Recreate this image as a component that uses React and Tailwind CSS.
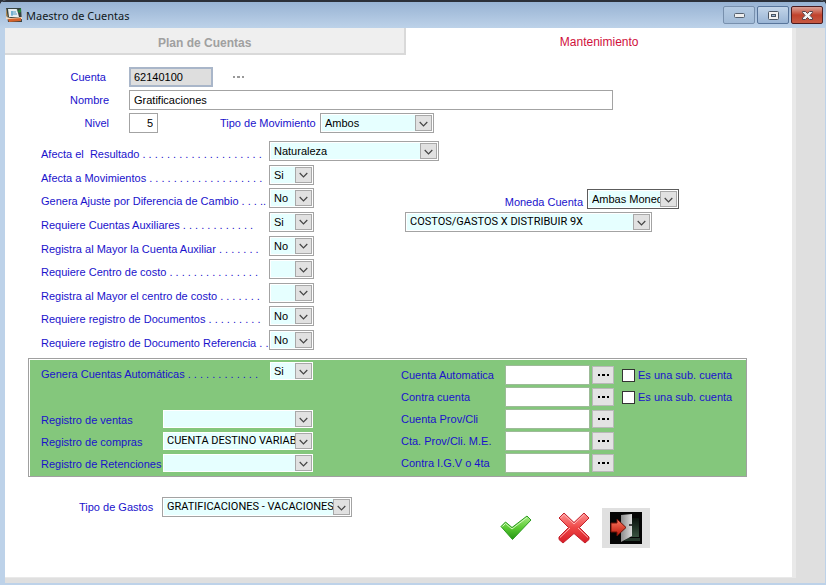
import React from "react";

function Field({ id, label, value = "", className = "", font = "", frame = "border-[#a3a3a3]", labelled = false }) {
  return (
    <span className={`relative flex h-5 shrink-0 border bg-white p-px ${frame} ${className}`}>
      <select
        id={id}
        aria-label={labelled ? undefined : label}
        defaultValue={value}
        className={`h-4 w-full appearance-none rounded-none bg-[#e6ffff] pl-[3px] pr-[17px] text-[11px] leading-4 text-black outline-none ${font}`}
      >
        <option value={value}>{value}</option>
      </select>
      <span className="pointer-events-none absolute right-px top-px flex h-4 w-[17px] items-center justify-center border border-[#a8a8a8] bg-[#e1e1e1] pt-px">
        <svg width="9" height="6" viewBox="0 0 9 6" fill="none" stroke="#444" strokeWidth="1.2" aria-hidden="true">
          <path d="M0.7 1 4.5 4.8 8.3 1" />
        </svg>
      </span>
    </span>
  );
}

function Dots({ label, className = "" }) {
  return (
    <button type="button" aria-label={label} className={`flex shrink-0 items-center justify-center ${className}`}>
      <svg width="11" height="2" viewBox="0 0 11 2" fill="currentColor" aria-hidden="true">
        <path d="M0 0h2v2H0zM4 0h3v2H4zM9 0h2v2H9z" />
      </svg>
    </button>
  );
}

const capsFont = "font-['Roboto','Liberation_Sans',sans-serif]";

const options = [
  ["resultado", "Afecta el  Resultado . . . . . . . . . . . . . . . . . . . .", "Naturaleza"],
  ["movimientos", "Afecta a Movimientos . . . . . . . . . . . . . . . . . . .", "Si"],
  ["ajuste", "Genera Ajuste por Diferencia de Cambio . . . ..", "No"],
  ["auxiliares", "Requiere Cuentas Auxiliares . . . . . . . . . . . .", "Si"],
  ["mayoraux", "Registra al Mayor la Cuenta Auxiliar . . . . . . .", "No"],
  ["centro", "Requiere Centro de costo . . . . . . . . . . . . . . .", ""],
  ["mayorcentro", "Registra al Mayor el centro de costo . . . . . . .", ""],
  ["documentos", "Requiere registro de Documentos . . . . . . . . .", "No"],
  ["referencia", "Requiere registro de Documento Referencia . .", "No"],
];

const registers = [
  ["ventas", "Registro de ventas", ""],
  ["compras", "Registro de compras", "CUENTA DESTINO VARIABLE"],
  ["retenciones", "Registro de Retenciones", ""],
];

const accounts = [
  ["automatica", "Cuenta Automatica", true],
  ["contra", "Contra cuenta", true],
  ["prov", "Cuenta Prov/Cli", false],
  ["provme", "Cta. Prov/Cli. M.E.", false],
  ["igv", "Contra I.G.V o 4ta", false],
];

function TitleBar() {
  return (
    <header className="flex h-7 items-center border-t-2 border-[#2b2f38] bg-gradient-to-b from-[#98b3d3] to-[#bdd2e9] pl-[6px] pr-[3px]">
      <svg width="16" height="16" viewBox="0 0 16 16" aria-hidden="true">
        <path d="M0 1h15l1 14H2z" fill="#37423f" />
        <path d="M2 2h9l2 8H3z" fill="#e9eef0" />
        <path d="M5 5h5M5 7h6M6 4v5" stroke="#4e9cc4" strokeWidth="1" />
        <path d="m10 2 2 2 3-3v4l-2 1z" fill="#25843b" />
        <path d="m0 10 5 1 11-1v2l-11 1-5-1z" fill="#f3d9bd" />
        <path d="m2 12 13-1v3l-12 1z" fill="#d4622b" />
        <path d="M0 1v8l2 1z" fill="#b08b57" />
      </svg>
      <h1 className="ml-1 flex-1 pt-px font-['Noto_Sans','Open_Sans',sans-serif] text-[11px] text-[#101820]">Maestro de Cuentas</h1>
      <div className="flex gap-[2px]">
        <button type="button" aria-label="Minimizar" className="flex h-[18px] w-8 items-center justify-center rounded-[2px] border border-[#7890ad] bg-gradient-to-b from-[#b4cae2] to-[#a2bbd7]">
          <svg width="11" height="6" viewBox="0 0 11 6" aria-hidden="true"><rect x=".5" y="1.5" width="10" height="4" rx="1" fill="#eee" stroke="#55606e" /></svg>
        </button>
        <button type="button" aria-label="Maximizar" className="flex h-[18px] w-8 items-center justify-center rounded-[2px] border border-[#58759b] bg-gradient-to-b from-[#c3d5e9] to-[#9ab5d5]">
          <svg width="11" height="9" viewBox="0 0 11 9" aria-hidden="true"><rect x=".5" y=".5" width="10" height="8" rx="1" fill="#f2f2f2" stroke="#4b5562" /><rect x="3.5" y="3.5" width="4" height="2" fill="#9db6d4" stroke="#4b5562" /></svg>
        </button>
        <button type="button" aria-label="Cerrar" className="flex h-[18px] w-8 items-center justify-center rounded-[2px] border border-[#4c1c20] bg-gradient-to-b from-[#d9a096] via-[#c0412c] to-[#c65a44]">
          <svg width="11" height="9" viewBox="0 0 11 9" aria-hidden="true"><path d="M.5.5h3l2 2 2-2h3v1L8 4.500l2.500 2.500v1.500h-3l-2-2-2 2h-3V7L3 4.500.5 1.500z" fill="#f4f4f4" stroke="#54424a" /></svg>
        </button>
      </div>
    </header>
  );
}

export default function App() {
  return (
    <div className="flex min-h-screen flex-col bg-[#2b2f38] font-['Liberation_Sans',Arial,sans-serif] text-[11px] leading-[14px] text-[#1a12cc]">
      <div className="flex flex-1 flex-col overflow-hidden rounded-t-md bg-[#bdd2e9]">
        <TitleBar />
        <div className="ml-[5px] mr-px mb-[2px] flex flex-1 flex-col bg-[#dfdfdf] pb-[5px] pr-[29px]">
          <main className="flex flex-1 flex-col border-b border-r-4 border-[#e9e9e9] bg-white">
            <nav className="flex h-[27px] text-[12px]">
              <button type="button" className="basis-[51%] border-b-2 border-r-2 border-[#d9d9d9] bg-[#efefef] pt-1 font-bold text-[#a0a0a0]">Plan de Cuentas</button>
              <button type="button" className="flex-1 text-[#d0103c]">Mantenimiento</button>
            </nav>

            <form className="flex flex-col" onSubmit={(e) => e.preventDefault()}>
              <div className="flex flex-col gap-[3px] pl-[65px] pt-3">
                <div className="flex items-center">
                  <label htmlFor="cuenta" className="w-[39px] text-right">Cuenta&nbsp;</label>
                  <input id="cuenta" defaultValue="62140100" className="ml-5 h-5 w-[84px] border-2 border-[#a9b6c9] bg-[#dedede] px-[3px] text-black" />
                  <Dots label="Buscar cuenta" className="ml-5 h-5 text-[#999]" />
                </div>
                <div className="flex items-center pr-[179px]">
                  <label htmlFor="nombre" className="w-[39px] text-right">Nombre</label>
                  <input id="nombre" defaultValue="Gratificaciones" className="ml-5 h-5 min-w-0 flex-1 border border-[#a3a3a3] bg-white px-1 text-black" />
                </div>
                <div className="flex items-center">
                  <label htmlFor="nivel" className="w-[39px] text-right">Nivel</label>
                  <input id="nivel" defaultValue="5" className="ml-5 h-5 w-[29px] border border-[#a3a3a3] bg-white px-1 text-right text-black" />
                  <label htmlFor="tipomov" className="ml-[62px] w-[100px]">Tipo de Movimiento</label>
                  <Field id="tipomov" labelled value="Ambos" className="w-[114px]" />
                </div>
              </div>

              <div className="mt-2 flex pl-9">
                <div className="flex h-[209px] w-[364px] flex-col justify-between">
                  {options.map(([id, text, value], i) => (
                    <div key={id} className="flex h-5 items-end">
                      <label htmlFor={id} className="w-[228px] shrink-0 whitespace-pre">{text}</label>
                      <Field id={id} labelled value={value} className={i === 0 ? "w-[170px]" : "w-[45px]"} />
                    </div>
                  ))}
                </div>
                <div className="flex w-[274px] flex-col gap-[3px] pt-12">
                  <div className="flex items-end justify-end gap-1">
                    <label htmlFor="moneda">Moneda Cuenta</label>
                    <Field id="moneda" labelled value="Ambas Monedas" frame="border-[#5c5c5c]" className="w-[92px]" />
                  </div>
                  <Field id="distribuir" label="Distribución" value="COSTOS/GASTOS X DISTRIBUIR 9X" font={capsFont} className="w-[247px]" />
                </div>
              </div>

              <fieldset className="ml-[23px] mr-[45px] mt-2 border border-[#a0a0a0] bg-[#84c77c] shadow-[inset_1px_1px_0_#fff]">
                <div className="flex h-[117px] justify-between px-3">
                  <div className="flex flex-col justify-between pb-[3px] pt-[2px]">
                    <div className="flex h-5 items-end">
                      <label htmlFor="genera" className="w-[228px]">Genera Cuentas Automáticas . . . . . . . . . . . .</label>
                      <Field id="genera" labelled value="Si" frame="border-transparent bg-clip-padding" className="w-[45px]" />
                    </div>
                    <div className="flex flex-col gap-[2px]">
                      {registers.map(([id, text, value]) => (
                        <div key={id} className="flex items-center">
                          <label htmlFor={id} className="w-[121px] pt-px">{text}</label>
                          <Field id={id} labelled value={value} font={capsFont} frame="border-transparent bg-clip-padding" className="w-[152px]" />
                        </div>
                      ))}
                    </div>
                  </div>
                  <div className="flex w-[333px] flex-col justify-end gap-[2px] pb-[3px]">
                    {accounts.map(([id, text, sub]) => (
                      <div key={id} className="flex items-center">
                        <label htmlFor={id} className="w-[104px]">{text}</label>
                        <input id={id} className="h-5 w-[85px] border border-[#9dbb98] bg-white px-1 text-black" />
                        <Dots label={`Buscar ${text}`} className="ml-[2px] h-[18px] w-[22px] border border-[#b9b9b9] bg-[#e3e3e3] text-black" />
                        {sub && (
                          <label className="ml-2 flex items-center gap-[3px] whitespace-nowrap">
                            <input type="checkbox" className="h-[13px] w-[13px] appearance-none border border-[#333] bg-white" />
                            Es una sub. cuenta
                          </label>
                        )}
                      </div>
                    ))}
                  </div>
                </div>
              </fieldset>

              <div className="flex pl-[74px] pt-5">
                <div className="flex h-5 items-center">
                  <label htmlFor="gastos" className="w-[83px]">Tipo de Gastos</label>
                  <Field id="gastos" labelled value="GRATIFICACIONES - VACACIONES" font={capsFont} className="w-[190px]" />
                </div>
                <div className="ml-36 mt-[11px] flex items-center">
                  <button type="button" aria-label="Aceptar" className="flex h-10 w-10 items-center justify-center">
                    <svg width="32" height="28" viewBox="0 0 32 28" aria-hidden="true">
                      <defs><linearGradient id="ok" x1="0" y1="0" x2="0" y2="1"><stop offset="0" stopColor="#a8ec84" /><stop offset=".5" stopColor="#5bcb34" /><stop offset="1" stopColor="#269414" /></linearGradient></defs>
                      <path d="M1 12.500 5.500 8l6.500 5.500L27 2l4 4L12.500 25.500z" fill="url(#ok)" stroke="#2b9c1f" strokeLinejoin="round" />
                      <path d="m2.500 12.500 3-3 6.500 5.500L27 3.500" fill="none" stroke="#d3f8bd" />
                    </svg>
                  </button>
                  <button type="button" aria-label="Cancelar" className="ml-[18px] flex h-10 w-10 items-center justify-center">
                    <svg width="32" height="32" viewBox="0 0 32 32" aria-hidden="true">
                      <defs><linearGradient id="no" x1="0" y1="0" x2="0" y2="1"><stop offset="0" stopColor="#ff9292" /><stop offset=".5" stopColor="#ee4545" /><stop offset="1" stopColor="#d81c27" /></linearGradient></defs>
                      <path d="M1 6 6 1l10 9.500L26 1l5 5-9.500 9.500L31 25v2.500L27 31l-11-9.500L5 31l-4-3.500V25l9.500-9.500z" fill="url(#no)" stroke="#c3202a" strokeLinejoin="round" />
                      <path d="m2.500 6 3.500-3.500 10 9.500L26 2.500M2 25.500l10-9.500M20 16l10 9.500" fill="none" stroke="#ffb4b4" />
                    </svg>
                  </button>
                  <button type="button" aria-label="Salir" className="ml-2 flex h-10 w-12 items-center justify-center bg-[#e0e0e0]">
                    <svg width="32" height="32" viewBox="0 0 32 32" aria-hidden="true">
                      <defs>
                        <linearGradient id="door"><stop stopColor="#8c8c8c" /><stop offset="1" stopColor="#dcdcdc" /></linearGradient>
                        <linearGradient id="back" x1="0" y1="0" x2="0" y2="1"><stop stopColor="#0a120d" /><stop offset="1" stopColor="#38523f" /></linearGradient>
                        <linearGradient id="arrow" x1="0" y1="0" x2="0" y2="1"><stop stopColor="#ff7a62" /><stop offset="1" stopColor="#b91508" /></linearGradient>
                      </defs>
                      <path d="M0 0h32v32H0z" fill="#050505" />
                      <path d="M21 6h8v19h-8z" fill="url(#back)" />
                      <path d="M18 26h12v3H14z" fill="#26382c" />
                      <path d="M11 3 22 2v22l-11 6z" fill="url(#door)" />
                      <path d="M19 13h3" stroke="#444" strokeWidth="2" />
                      <path d="M1 11h6V7l9 8.500L7 24v-4H1z" fill="url(#arrow)" stroke="#6e1208" />
                    </svg>
                  </button>
                </div>
              </div>
            </form>
          </main>
        </div>
      </div>
    </div>
  );
}
